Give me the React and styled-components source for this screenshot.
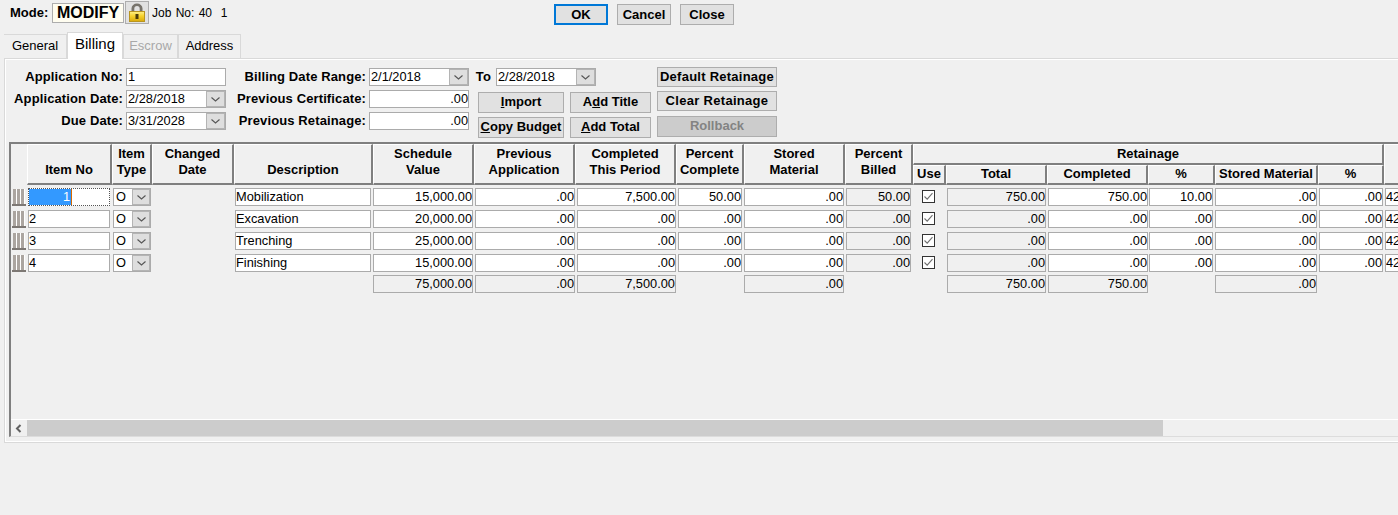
import React from 'react'
import styled, { createGlobalStyle } from 'styled-components'

const GlobalStyle = createGlobalStyle`
  html, body {
    margin: 0;
    padding: 0;
    height: 100%;
    overflow: hidden;
    background: #f0f0f0;
    font-family: 'Liberation Sans', Arial, sans-serif;
    font-size: 13px;
    color: #000;
  }
`

const COLUMNS = '16px 85px 40px 82px 139px 101px 101px 101px 68px 101px 68px 33px 101px 101px 67px 103px 66px 100px'

const cells = [
  { l: 1, r: 2 }, // item no
  { l: 1, r: 1 }, // type
  null, // changed date
  { l: 1, r: 2 }, // description
  { l: 0, r: 1 },
  { l: 1, r: 0 },
  { l: 2, r: 0 },
  { l: 2, r: 2 },
  { l: 0, r: 1 },
  { l: 1, r: 2 },
  null, // use
  { l: 1, r: 1 },
  { l: 1, r: 0 },
  { l: 1, r: 2 },
  { l: 0, r: 1 },
  { l: 1, r: 1 },
  { l: 1, r: 0 },
]

const rows = [
  { no: '1', desc: 'Mobilization', sched: '15,000.00', done: '7,500.00', pct: '50.00', billed: '50.00', total: '750.00', comp: '750.00', rpct: '10.00' },
  { no: '2', desc: 'Excavation', sched: '20,000.00', done: '.00', pct: '.00', billed: '.00', total: '.00', comp: '.00', rpct: '.00' },
  { no: '3', desc: 'Trenching', sched: '25,000.00', done: '.00', pct: '.00', billed: '.00', total: '.00', comp: '.00', rpct: '.00' },
  { no: '4', desc: 'Finishing', sched: '15,000.00', done: '.00', pct: '.00', billed: '.00', total: '.00', comp: '.00', rpct: '.00' },
]

const Page = styled.div`
  width: 1398px;
  height: 515px;
  overflow: hidden;
  background: #f0f0f0;
`

const TopBar = styled.div`
  display: flex;
  align-items: flex-start;
  height: 31px;
  padding: 1px 0 0 10px;
  box-sizing: border-box;
`

const ModeGroup = styled.div`
  display: flex;
  align-items: center;
  width: 544px;
  height: 23px;
`

const ModeLabel = styled.span`
  font-weight: bold;
  width: 42px;
`

const ModeValue = styled.div`
  width: 70px;
  height: 18px;
  border: 1px solid #adadad;
  background: #fffdf0;
  font-size: 16px;
  font-weight: bold;
  line-height: 18px;
  text-align: center;
`

const LockButton = styled.div`
  width: 22px;
  height: 21px;
  margin-left: 1px;
  border: 1px solid #adadad;
  background: #e1e1e1;
  display: flex;
  align-items: center;
  justify-content: center;
`

const JobText = styled.span`
  margin-left: 3px;
  font-size: 12px;
  word-spacing: 1px;
  white-space: pre;
`

const TopButtons = styled.div`
  display: flex;
  gap: 9px;
  padding-top: 3px;
`

const Button = styled.div`
  box-sizing: border-box;
  width: ${p => p.$w}px;
  height: ${p => p.$h || 21}px;
  margin-top: ${p => p.$mt || 0}px;
  padding-bottom: ${p => p.$lift || 0}px;
  border: ${p => (p.$focus ? '2px solid #0078d7' : '1px solid #adadad')};
  background: ${p => (p.$off ? '#cccccc' : '#e1e1e1')};
  color: ${p => (p.$off ? '#838383' : '#000')};
  font-weight: bold;
  letter-spacing: ${p => p.$track || 0}px;
  display: flex;
  align-items: center;
  justify-content: center;
  white-space: pre;
`

const Tabs = styled.div`
  display: flex;
  align-items: flex-end;
  height: 27px;
  padding-left: 4px;
`

const Tab = styled.div`
  box-sizing: border-box;
  width: ${p => p.$w}px;
  height: ${p => (p.$active ? 27 : 24)}px;
  border: 1px solid #d9d9d9;
  border-bottom: none;
  border-left: ${p => (p.$first ? 'none' : '1px solid #d9d9d9')};
  margin-bottom: ${p => (p.$active ? -1 : 0)}px;
  background: ${p => (p.$active ? '#ffffff' : '#f0f0f0')};
  color: ${p => (p.$off ? '#a8a8a8' : '#000')};
  font-size: ${p => (p.$active ? 15 : 13)}px;
  text-align: center;
  line-height: ${p => (p.$active ? 21 : 22)}px;
  position: relative;
  z-index: 1;
`

const Panel = styled.div`
  box-sizing: border-box;
  width: 1420px;
  height: 385px;
  margin-left: 4px;
  border: 1px solid #d9d9d9;
  box-shadow: inset 1px 1px 0 #fff, inset -1px -1px 0 #fff;
  padding: 9px 0 0 4px;
  display: flex;
  flex-direction: column;
`

const Form = styled.div`
  display: flex;
  height: 74px;
`

const FieldGrid = styled.div`
  display: grid;
  grid-template-columns: ${p => p.$label}px 100px;
  grid-auto-rows: 18px;
  row-gap: 4px;
  column-gap: 3px;
  align-content: start;
`

const Label = styled.div`
  font-weight: bold;
  text-align: right;
  line-height: 18px;
  letter-spacing: 0.12px;
  white-space: nowrap;
`

const Middle = styled.div`
  margin-left: 1px;
  display: flex;
  flex-direction: column;
  gap: 4px;
`

const RangeRow = styled.div`
  display: flex;
  align-items: center;
  height: 18px;
`

const RangeLabel = styled(Label)`
  width: 139px;
  margin-right: 3px;
`

const ToLabel = styled(Label)`
  width: 27px;
  padding-right: 5px;
  box-sizing: border-box;
`

const MiddleLower = styled.div`
  display: flex;
`

const ActionGrid = styled.div`
  display: grid;
  grid-template-columns: 86px 81px;
  grid-auto-rows: 21px;
  row-gap: 4px;
  column-gap: 6px;
  margin: 2px 0 0 9px;
`

const RetainageActions = styled.div`
  display: flex;
  flex-direction: column;
  margin: -1px 0 0 6px;
`

const Field = styled.div`
  box-sizing: border-box;
  height: 18px;
  width: ${p => (p.$w ? `${p.$w}px` : 'auto')};
  margin: ${p => `0 ${p.$r || 0}px 0 ${p.$l || 0}px`};
  border: 1px solid #ababab;
  background: ${p => (p.$gray ? '#f0f0f0' : '#fff')};
  font-size: 12.8px;
  line-height: 16px;
  padding: 0 0 0 ${p => p.$pad || 0}px;
  text-align: ${p => p.$align || 'left'};
  white-space: nowrap;
  overflow: hidden;
`

const Combo = styled.div`
  box-sizing: border-box;
  display: flex;
  height: 18px;
  width: ${p => (p.$w ? `${p.$w}px` : 'auto')};
  margin: ${p => `0 ${p.$r || 0}px 0 ${p.$l || 0}px`};
  border: 1px solid #ababab;
  background: #fff;
  font-size: 12.8px;
  line-height: 16px;
`

const ComboText = styled.div`
  flex: 1;
  padding: 0 ${p => p.$pad || 1}px;
  white-space: nowrap;
  overflow: hidden;
`

const ComboButton = styled.div`
  width: ${p => p.$w || 18}px;
  background: #dedede;
  box-shadow: inset 0 0 0 1px #b4b4b4;
  display: flex;
  align-items: center;
  justify-content: center;
`

const TableBox = styled.div`
  box-sizing: border-box;
  width: 1400px;
  height: 295px;
  border-top: 2px solid #7f7f7f;
  border-left: 2px solid #7f7f7f;
  border-bottom: 1px solid #dcdcdc;
  display: flex;
  flex-direction: column;
  overflow: hidden;
`

const TableBody = styled.div`
  flex: 1;
  overflow: hidden;
`

const HeaderGrid = styled.div`
  display: grid;
  grid-template-columns: ${COLUMNS};
  grid-template-rows: 21px 20px;
`

const HeaderGap = styled.div`
  grid-row: span 2;
`

const HeaderCell = styled.div`
  box-sizing: border-box;
  grid-row: span ${p => p.$rows || 1};
  grid-column: span ${p => p.$cols || 1};
  border-top: 1px solid #fff;
  border-left: 1px solid #fff;
  border-right: 2px solid #7f7f7f;
  border-bottom: 2px solid #7f7f7f;
  font-weight: bold;
  line-height: 16px;
  text-align: center;
  display: flex;
  align-items: flex-end;
  justify-content: center;
  padding-bottom: ${p => (p.$rows === 2 ? 5 : 1)}px;
  white-space: pre-line;
`

const BodyGrid = styled.div`
  display: grid;
  grid-template-columns: ${COLUMNS};
  grid-auto-rows: 18px;
  row-gap: 4px;
  padding-top: 3px;
`

const TotalsGrid = styled(BodyGrid)`
  padding-top: 3px;
`

const Blank = styled.div``

const HandleWrap = styled.div`
  display: flex;
  padding: 1px 0 0 1px;
`

const UseCell = styled.div`
  display: flex;
  justify-content: center;
  padding: 2px 2px 0 0;
`

const FocusField = styled.div`
  box-sizing: border-box;
  height: 18px;
  margin: 0 2px 0 1px;
  border: 1px dotted #555;
  background: #fff;
  display: flex;
  font-size: 12.8px;
  line-height: 16px;
`

const Selected = styled.div`
  width: 43px;
  background: #3399ff;
  color: #fff;
  text-align: right;
  border-right: 1px solid #d96a00;
  box-sizing: border-box;
  padding-right: 1px;
`

const Scrollbar = styled.div`
  display: flex;
  height: 16px;
  border-top: 1px solid #fff;
`

const ArrowBox = styled.div`
  width: 16px;
  display: flex;
  align-items: center;
  justify-content: center;
`

const Thumb = styled.div`
  width: 1136px;
  background: #cccccc;
`

const Chevron = () => (
  <svg width="11" height="7" viewBox="0 0 11 7" fill="none">
    <path d="M1.5 1.5 L5.5 5 L9.5 1.5" stroke="#555" strokeWidth="1.1" />
  </svg>
)

const LockIcon = () => (
  <svg width="16" height="19" viewBox="0 0 16 19">
    <defs>
      <linearGradient id="lockBody" x1="0" y1="0" x2="0" y2="1">
        <stop offset="0" stopColor="#fdf08a" />
        <stop offset="0.45" stopColor="#f6d22c" />
        <stop offset="1" stopColor="#d9a90c" />
      </linearGradient>
    </defs>
    <path d="M2.5 9 V5.5 a5.5 5 0 0 1 11 0 V9 H10.7 V5.8 a2.7 2.7 0 0 0 -5.4 0 V9 Z" fill="#77736b" />
    <rect x="0.5" y="8.5" width="15" height="10" fill="url(#lockBody)" stroke="#b9951f" />
    <rect x="6.5" y="11" width="3" height="5" fill="#4a3b08" />
  </svg>
)

const Grip = () => (
  <svg width="14" height="17" viewBox="0 0 14 17">
    <rect x="0" y="15" width="14" height="2" fill="#7d7874" />
    {[1, 5, 9].map(x => (
      <g key={x}>
        <rect x={x} y="0" width="3" height="15" fill="#aba5a0" />
        <rect x={x + 3} y="0" width="1" height="15" fill="#fff" />
      </g>
    ))}
  </svg>
)

const CheckBox = () => (
  <svg width="13" height="13" viewBox="0 0 13 13">
    <rect x="0.5" y="0.5" width="12" height="12" fill="#fff" stroke="#333" />
    <path d="M2.5 6.5 L5.2 9.2 L10.5 3.2" fill="none" stroke="#707070" strokeWidth="1.1" />
  </svg>
)

const LeftArrow = () => (
  <svg width="8" height="9" viewBox="0 0 8 9">
    <path d="M5.5 1 L2 4.5 L5.5 8" fill="none" stroke="#606060" strokeWidth="2" />
  </svg>
)

const DateCombo = ({ value }) => (
  <Combo $w={100}>
    <ComboText>{value}</ComboText>
    <ComboButton $w={19}>
      <Chevron />
    </ComboButton>
  </Combo>
)

const Row = ({ row }) => {
  const num = (i, value, gray) => (
    <Field $l={cells[i].l} $r={cells[i].r} $align="right" $gray={gray}>
      {value}
    </Field>
  )
  return (
    <>
      <HandleWrap>
        <Grip />
      </HandleWrap>
      {row.no === '1' ? (
        <FocusField>
          <Selected>1</Selected>
        </FocusField>
      ) : (
        <Field $l={1} $r={2}>{row.no}</Field>
      )}
      <Combo $l={1} $r={1}>
        <ComboText $pad={2}>O</ComboText>
        <ComboButton $w={18}>
          <Chevron />
        </ComboButton>
      </Combo>
      <Blank />
      <Field $l={1} $r={2}>{row.desc}</Field>
      {num(4, row.sched)}
      {num(5, '.00')}
      {num(6, row.done)}
      {num(7, row.pct)}
      {num(8, '.00')}
      {num(9, row.billed, true)}
      <UseCell>
        <CheckBox />
      </UseCell>
      {num(11, row.total, true)}
      {num(12, row.comp)}
      {num(13, row.rpct)}
      {num(14, '.00')}
      {num(15, '.00')}
      <Field $l={1}>42</Field>
    </>
  )
}

const Totals = () => {
  const total = (i, value) => (
    <Field $l={cells[i].l} $r={cells[i].r} $align="right" $gray>
      {value}
    </Field>
  )
  return (
    <TotalsGrid>
      <Blank />
      <Blank />
      <Blank />
      <Blank />
      <Blank />
      {total(4, '75,000.00')}
      {total(5, '.00')}
      {total(6, '7,500.00')}
      <Blank />
      {total(8, '.00')}
      <Blank />
      <Blank />
      {total(11, '750.00')}
      {total(12, '750.00')}
      <Blank />
      {total(14, '.00')}
    </TotalsGrid>
  )
}

export default function App() {
  return (
    <Page>
      <GlobalStyle />
      <TopBar>
        <ModeGroup>
          <ModeLabel>Mode:</ModeLabel>
          <ModeValue>MODIFY</ModeValue>
          <LockButton>
            <LockIcon />
          </LockButton>
          <JobText>Job No: 40  1</JobText>
        </ModeGroup>
        <TopButtons>
          <Button $w={54} $focus>OK</Button>
          <Button $w={54}>Cancel</Button>
          <Button $w={54}>Close</Button>
        </TopButtons>
      </TopBar>
      <Tabs>
        <Tab $w={63} $first>General</Tab>
        <Tab $w={56} $active>Billing</Tab>
        <Tab $w={55} $off>Escrow</Tab>
        <Tab $w={63}>Address</Tab>
      </Tabs>
      <Panel>
        <Form>
          <FieldGrid $label={114}>
            <Label>Application No:</Label>
            <Field $w={100} $pad={1}>1</Field>
            <Label>Application Date:</Label>
            <DateCombo value="2/28/2018" />
            <Label>Due Date:</Label>
            <DateCombo value="3/31/2028" />
          </FieldGrid>
          <Middle>
            <RangeRow>
              <RangeLabel>Billing Date Range:</RangeLabel>
              <DateCombo value="2/1/2018" />
              <ToLabel>To</ToLabel>
              <DateCombo value="2/28/2018" />
            </RangeRow>
            <MiddleLower>
              <FieldGrid $label={139}>
                <Label>Previous Certificate:</Label>
                <Field $w={100} $align="right">.00</Field>
                <Label>Previous Retainage:</Label>
                <Field $w={100} $align="right">.00</Field>
              </FieldGrid>
              <ActionGrid>
                <Button $w={86} $lift={2}><span><u>I</u>mport</span></Button>
                <Button $w={81} $lift={2}><span>A<u>d</u>d Title</span></Button>
                <Button $w={86} $lift={2}><span><u>C</u>opy Budget</span></Button>
                <Button $w={81} $lift={2}><span><u>A</u>dd Total</span></Button>
              </ActionGrid>
            </MiddleLower>
          </Middle>
          <RetainageActions>
            <Button $w={120} $h={20} $lift={1} $track={0.25}>Default Retainage</Button>
            <Button $w={120} $h={20} $mt={4} $lift={1} $track={0.3}>Clear Retainage</Button>
            <Button $w={120} $h={21} $mt={5} $lift={2} $off>Rollback</Button>
          </RetainageActions>
        </Form>
        <TableBox>
          <TableBody>
            <HeaderGrid>
              <HeaderGap />
              <HeaderCell $rows={2}>Item No</HeaderCell>
              <HeaderCell $rows={2}>{'Item\nType'}</HeaderCell>
              <HeaderCell $rows={2}>{'Changed\nDate'}</HeaderCell>
              <HeaderCell $rows={2}>Description</HeaderCell>
              <HeaderCell $rows={2}>{'Schedule\nValue'}</HeaderCell>
              <HeaderCell $rows={2}>{'Previous\nApplication'}</HeaderCell>
              <HeaderCell $rows={2}>{'Completed\nThis Period'}</HeaderCell>
              <HeaderCell $rows={2}>{'Percent\nComplete'}</HeaderCell>
              <HeaderCell $rows={2}>{'Stored\nMaterial'}</HeaderCell>
              <HeaderCell $rows={2}>{'Percent\nBilled'}</HeaderCell>
              <HeaderCell $cols={6}>Retainage</HeaderCell>
              <HeaderCell $rows={2} />
              <HeaderCell>Use</HeaderCell>
              <HeaderCell>Total</HeaderCell>
              <HeaderCell>Completed</HeaderCell>
              <HeaderCell>%</HeaderCell>
              <HeaderCell>Stored Material</HeaderCell>
              <HeaderCell>%</HeaderCell>
            </HeaderGrid>
            <BodyGrid>
              {rows.map(row => (
                <Row key={row.no} row={row} />
              ))}
            </BodyGrid>
            <Totals />
          </TableBody>
          <Scrollbar>
            <ArrowBox>
              <LeftArrow />
            </ArrowBox>
            <Thumb />
          </Scrollbar>
        </TableBox>
      </Panel>
    </Page>
  )
}
